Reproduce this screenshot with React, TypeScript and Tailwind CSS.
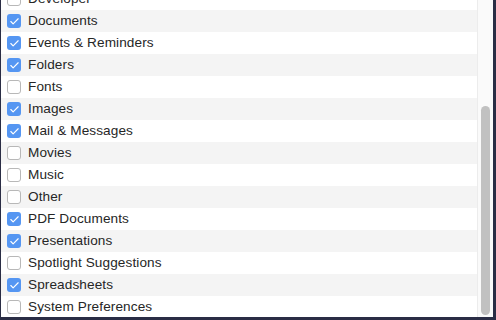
import { Check } from 'lucide-react';

const items: { label: string; checked: boolean }[] = [
  { label: 'Developer', checked: false },
  { label: 'Documents', checked: true },
  { label: 'Events & Reminders', checked: true },
  { label: 'Folders', checked: true },
  { label: 'Fonts', checked: false },
  { label: 'Images', checked: true },
  { label: 'Mail & Messages', checked: true },
  { label: 'Movies', checked: false },
  { label: 'Music', checked: false },
  { label: 'Other', checked: false },
  { label: 'PDF Documents', checked: true },
  { label: 'Presentations', checked: true },
  { label: 'Spotlight Suggestions', checked: false },
  { label: 'Spreadsheets', checked: true },
  { label: 'System Preferences', checked: false },
];

function Box({ checked }: { checked: boolean }) {
  if (checked) {
    return (
      <span className="flex h-[14px] w-[14px] items-center justify-center rounded-[3px] bg-[#5596f2]">
        <Check size={11} strokeWidth={2.5} className="text-white" />
      </span>
    );
  }
  return <span className="h-[14px] w-[14px] rounded-[3px] border border-[#b8b8b8] bg-white" />;
}

export default function App() {
  return (
    <div className="flex h-[320px] w-[496px] overflow-hidden border-b-[3px] border-l border-r-[3px] border-[#2a2d45] bg-white font-['Helvetica_Neue','Liberation_Sans',sans-serif]">
      <div className="flex-1 overflow-hidden border-r border-[#ececec]">
        <div className="-mt-[12px]">
          {items.map((it, i) => (
            <div
              key={it.label}
              className={`flex h-[22px] items-center gap-[7px] pl-[6px] ${i % 2 === 1 ? 'bg-[#f4f4f4]' : 'bg-white'}`}
            >
              <Box checked={it.checked} />
              <span className="text-[13.6px] tracking-[0.1px] text-[#262626]">{it.label}</span>
            </div>
          ))}
        </div>
      </div>
      <div className="flex w-[15px] flex-col bg-[#fafafa] px-[3px] pb-[2px] pt-[106px]">
        <div className="flex-1 rounded-full bg-[#c1c1c1]" />
      </div>
    </div>
  );
}
